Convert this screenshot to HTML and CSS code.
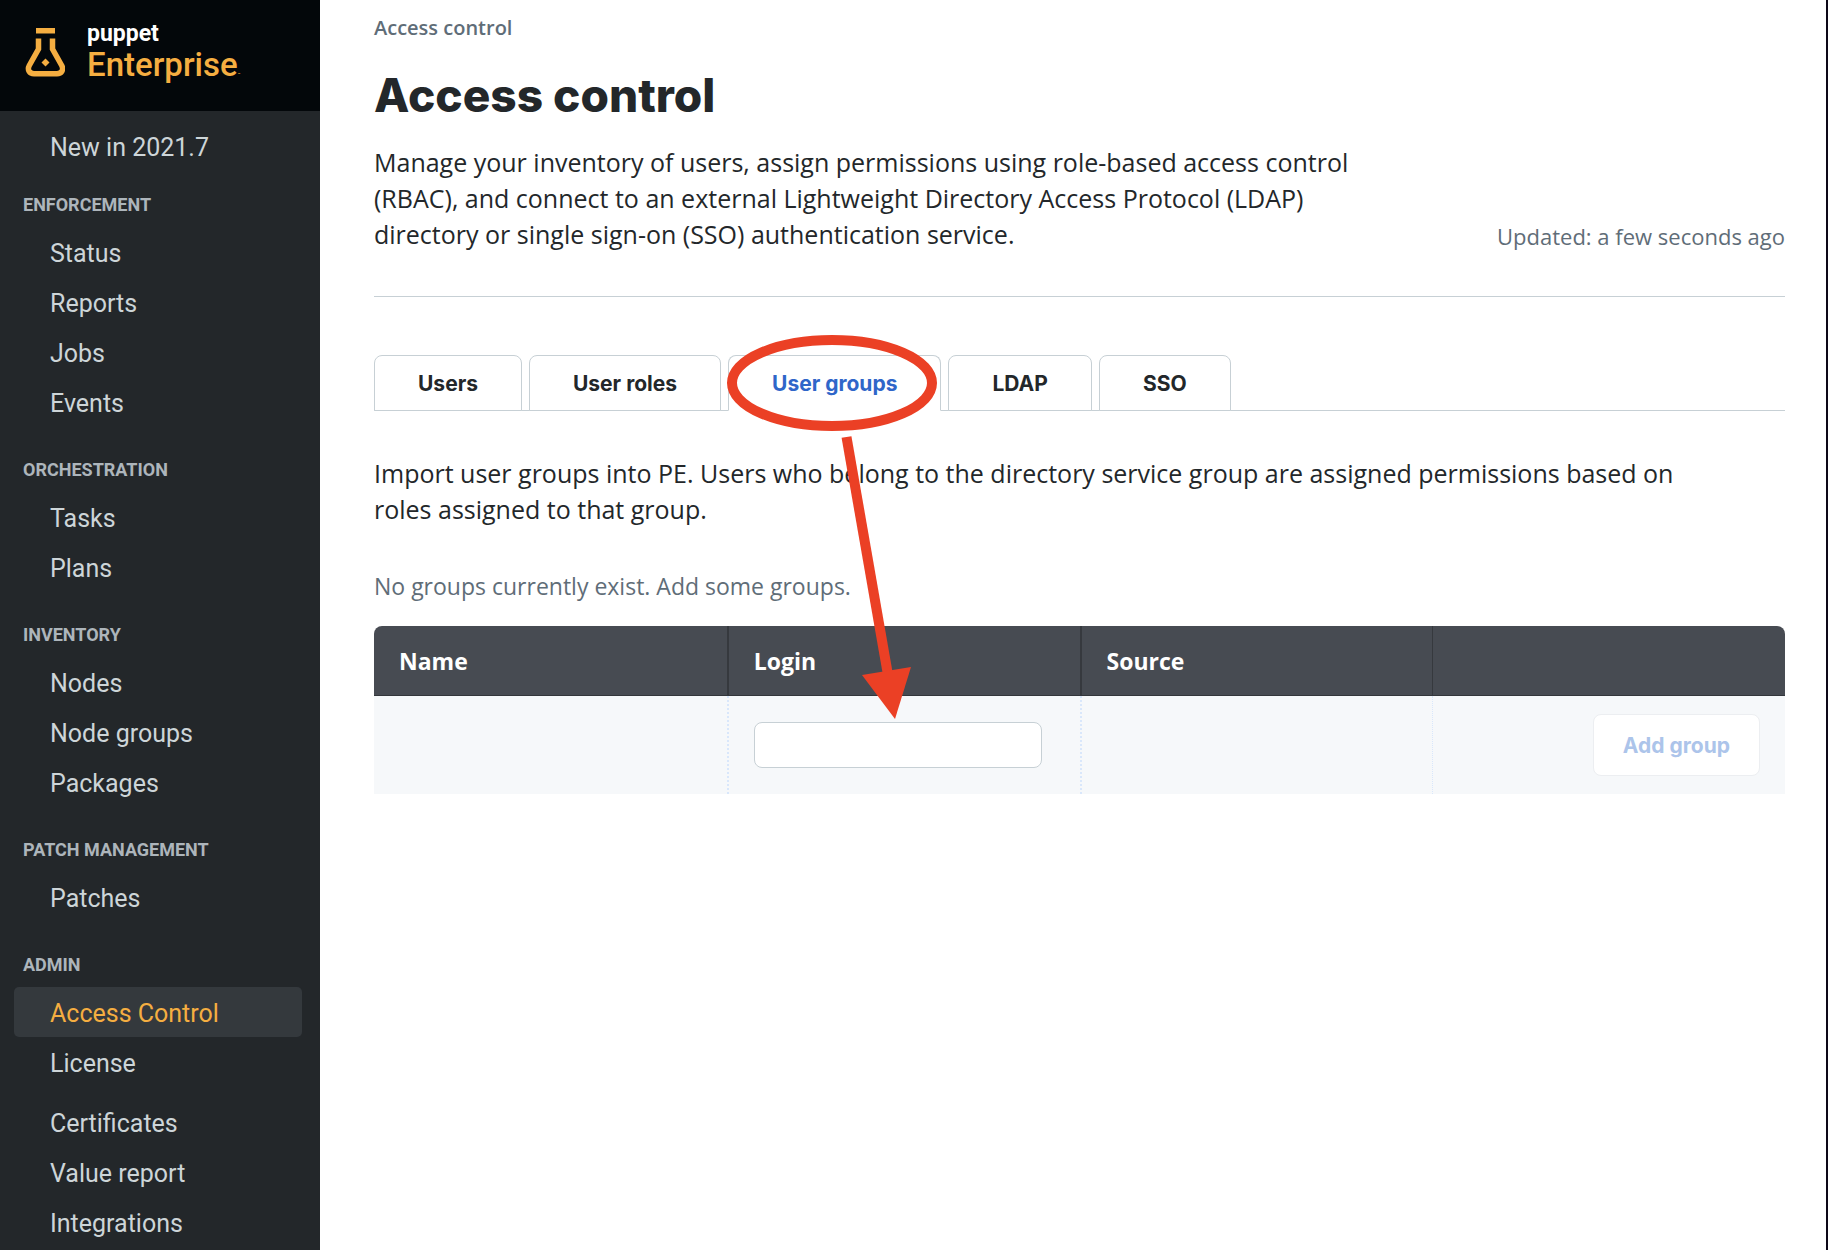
FILE: index.html
```html
<!DOCTYPE html>
<html lang="en">
<head>
<meta charset="utf-8">
<title>Access control - Puppet Enterprise</title>
<link rel="stylesheet" href="styles.css">
</head>
<body>
<div class="app">
  <aside class="sidebar">
    <a class="brand" href="#">
      <svg class="brand-icon" width="40" height="50" viewBox="0 0 40 50" aria-hidden="true">
        <path d="M11 0H30V5.500H11Z" fill="#f5ae41"/>
        <path d="M13.500 10.500V21L4.300 37.500C2 42 4.500 45.700 9 45.700H32C36.500 45.700 39 42 36.700 37.500L27.500 21V10.500" fill="none" stroke="#f5ae41" stroke-width="5.500"/>
        <path d="M20.500 30.500L24.500 34.500L20.500 38.500L16.500 34.500Z" fill="#f5ae41"/>
      </svg>
      <span class="brand-text">
        <span class="brand-name">puppet</span>
        <span class="brand-product">Enterprise<span class="brand-mark">™</span></span>
      </span>
    </a>
    <nav class="nav">
      <ul class="nav-list">
        <li><a class="nav-link" href="#">New in 2021.7</a></li>
      </ul>
      <h2 class="nav-heading nav-heading-first">Enforcement</h2>
      <ul class="nav-list">
        <li><a class="nav-link" href="#">Status</a></li>
        <li><a class="nav-link" href="#">Reports</a></li>
        <li><a class="nav-link" href="#">Jobs</a></li>
        <li><a class="nav-link" href="#">Events</a></li>
      </ul>
      <h2 class="nav-heading">Orchestration</h2>
      <ul class="nav-list">
        <li><a class="nav-link" href="#">Tasks</a></li>
        <li><a class="nav-link" href="#">Plans</a></li>
      </ul>
      <h2 class="nav-heading">Inventory</h2>
      <ul class="nav-list">
        <li><a class="nav-link" href="#">Nodes</a></li>
        <li><a class="nav-link" href="#">Node groups</a></li>
        <li><a class="nav-link" href="#">Packages</a></li>
      </ul>
      <h2 class="nav-heading">Patch management</h2>
      <ul class="nav-list">
        <li><a class="nav-link" href="#">Patches</a></li>
      </ul>
      <h2 class="nav-heading">Admin</h2>
      <ul class="nav-list">
        <li><a class="nav-link nav-link-active" href="#" aria-current="page">Access Control</a></li>
        <li><a class="nav-link" href="#">License</a></li>
      </ul>
      <ul class="nav-list nav-list-extra">
        <li><a class="nav-link" href="#">Certificates</a></li>
        <li><a class="nav-link" href="#">Value report</a></li>
        <li><a class="nav-link" href="#">Integrations</a></li>
      </ul>
    </nav>
  </aside>

  <main class="main">
    <a class="breadcrumb" href="#">Access control</a>
    <header class="page-header">
      <div class="page-intro">
        <h1 class="page-title">Access control</h1>
        <p class="text">Manage your inventory of users, assign permissions using role-based access control (RBAC), and connect to an external Lightweight Directory Access Protocol (LDAP) directory or single sign-on (SSO) authentication service.</p>
      </div>
      <p class="updated">Updated: a few seconds ago</p>
    </header>

    <div class="tabs" role="tablist">
      <button class="tab" type="button" role="tab">Users</button>
      <button class="tab" type="button" role="tab">User roles</button>
      <button class="tab tab-active" type="button" role="tab" aria-selected="true">User groups</button>
      <button class="tab" type="button" role="tab">LDAP</button>
      <button class="tab" type="button" role="tab">SSO</button>
    </div>

    <section class="panel">
      <p class="text panel-text">Import user groups into PE. Users who belong to the directory service group are assigned permissions based on roles assigned to that group.</p>
      <p class="empty">No groups currently exist. Add some groups.</p>
      <table class="groups">
        <thead>
          <tr><th>Name</th><th>Login</th><th>Source</th><th></th></tr>
        </thead>
        <tbody>
          <tr>
            <td></td>
            <td><input class="login" type="text" aria-label="Login"></td>
            <td></td>
            <td class="actions"><button class="add" type="button" disabled>Add group</button></td>
          </tr>
        </tbody>
      </table>
    </section>

    <svg class="callout" width="220" height="400" viewBox="0 0 220 400" aria-hidden="true">
      <ellipse cx="112" cy="53" rx="100" ry="43" fill="none" stroke="#eb4025" stroke-width="10"/>
      <path d="M126.500 107L168 345" stroke="#eb4025" stroke-width="10"/>
      <path d="M142 345L191 337L175 389Z" fill="#eb4025"/>
    </svg>
  </main>
</div>
</body>
</html>
```
FILE: styles.css
```css
* {
  box-sizing: border-box;
}

body {
  margin: 0;
  background: #fff;
  color: #23272a;
  font-family: "Open Sans", "Noto Sans", sans-serif;
}

h1, h2, p, ul {
  margin: 0;
  padding: 0;
}

a {
  text-decoration: none;
}

.app {
  display: flex;
  min-height: 100vh;
  border-right: 2px solid #0d0818;
}

/* Sidebar */
.sidebar {
  flex: none;
  width: 320px;
  background: #23272a;
  font-family: Roboto, "Liberation Sans", sans-serif;
}

.brand {
  display: flex;
  gap: 22px;
  height: 111px;
  padding: 20px 25px;
  background: #03070a;
}

.brand-icon {
  margin-top: 8px;
}

.brand-text {
  display: flex;
  flex-direction: column;
}

.brand-name {
  color: #fff;
  font-size: 23px;
  font-weight: 700;
  line-height: 28px;
}

.brand-product {
  color: #f5ae41;
  font-size: 33px;
  font-weight: 500;
  line-height: 34px;
}

.brand-mark {
  font-size: 4px;
}

.nav {
  padding: 10px 18px 0 14px;
}

.nav-list {
  list-style: none;
}

.nav-list-extra {
  margin-top: 10px;
}

.nav-link {
  display: block;
  padding: 4px 36px 0;
  border-radius: 5px;
  color: #cdd5d8;
  font-size: 25px;
  line-height: 46px;
}

.nav-link-active {
  background: #34393d;
  color: #f5ae41;
}

.nav-heading {
  padding: 33px 9px 12px;
  color: #adb5bb;
  font-size: 18px;
  font-weight: 700;
  line-height: 20px;
  text-transform: uppercase;
}

.nav-heading-first {
  padding-top: 24px;
}

/* Page */
.main {
  position: relative;
  flex: 1;
  padding: 14px 41px 0 54px;
}

.breadcrumb {
  display: block;
  color: #5f6d78;
  font-size: 20px;
  font-weight: 600;
  line-height: 28px;
}

.page-header {
  display: flex;
  align-items: flex-end;
  justify-content: space-between;
  padding: 20px 0 44px;
  border-bottom: 1px solid #c7d0d5;
}

.page-intro {
  max-width: 1000px;
}

.page-title {
  margin-bottom: 16px;
  font-family: Inter, "Liberation Sans", sans-serif;
  font-size: 46px;
  font-weight: 800;
  line-height: 66px;
}

.text {
  font-size: 25px;
  line-height: 36px;
}

.updated {
  color: #5f6d78;
  font-size: 22px;
  line-height: 32px;
}

.tabs {
  display: flex;
  gap: 7px;
  margin-top: 58px;
  border-bottom: 1px solid #c7d0d5;
}

.tab {
  height: 56px;
  margin-bottom: -1px;
  padding: 0 43px;
  border: 1px solid #c7d0d5;
  border-radius: 8px 8px 0 0;
  background: #fff;
  color: #23272a;
  font-family: Inter, "Liberation Sans", sans-serif;
  font-size: 21px;
  font-weight: 700;
}

.tab-active {
  border-bottom-color: #fff;
  color: #2f66c9;
}

.panel-text {
  max-width: 1340px;
  margin-top: 44px;
}

.empty {
  margin: 41px 0 22px;
  color: #5f6d78;
  font-size: 23px;
  line-height: 36px;
}

.groups {
  width: 100%;
  table-layout: fixed;
  border-spacing: 0;
}

.groups th {
  height: 70px;
  padding: 0 25px;
  border-bottom: 1px solid #33363b;
  border-left: 2px solid #36393e;
  background: #474b52;
  color: #fff;
  font-size: 23px;
  font-weight: 700;
  text-align: left;
}

.groups th:first-child {
  border-left: 0;
  border-top-left-radius: 8px;
}

.groups th:last-child {
  border-left-width: 1px;
  border-top-right-radius: 8px;
}

.groups td {
  height: 98px;
  padding: 0 38px 0 25px;
  border-left: 2px dotted #d9e7fb;
  background: #f6f8fa;
}

.groups td:first-child {
  border-left: 0;
}

.groups .actions {
  padding-right: 25px;
  border-left-width: 1px;
  text-align: right;
}

.login {
  display: block;
  width: 100%;
  height: 46px;
  padding: 0 12px;
  border: 1px solid #c7d0d5;
  border-radius: 8px;
  background: #fff;
  font: inherit;
}

.add {
  height: 62px;
  padding: 0 29px;
  border: 1px solid #eceef1;
  border-radius: 8px;
  background: #fff;
  color: #acc4ea;
  font-family: Inter, "Liberation Sans", sans-serif;
  font-size: 21px;
  font-weight: 700;
}

/* Red annotation drawn over the tabs and the table */
.callout {
  position: absolute;
  top: 330px;
  left: 400px;
  pointer-events: none;
}
```
